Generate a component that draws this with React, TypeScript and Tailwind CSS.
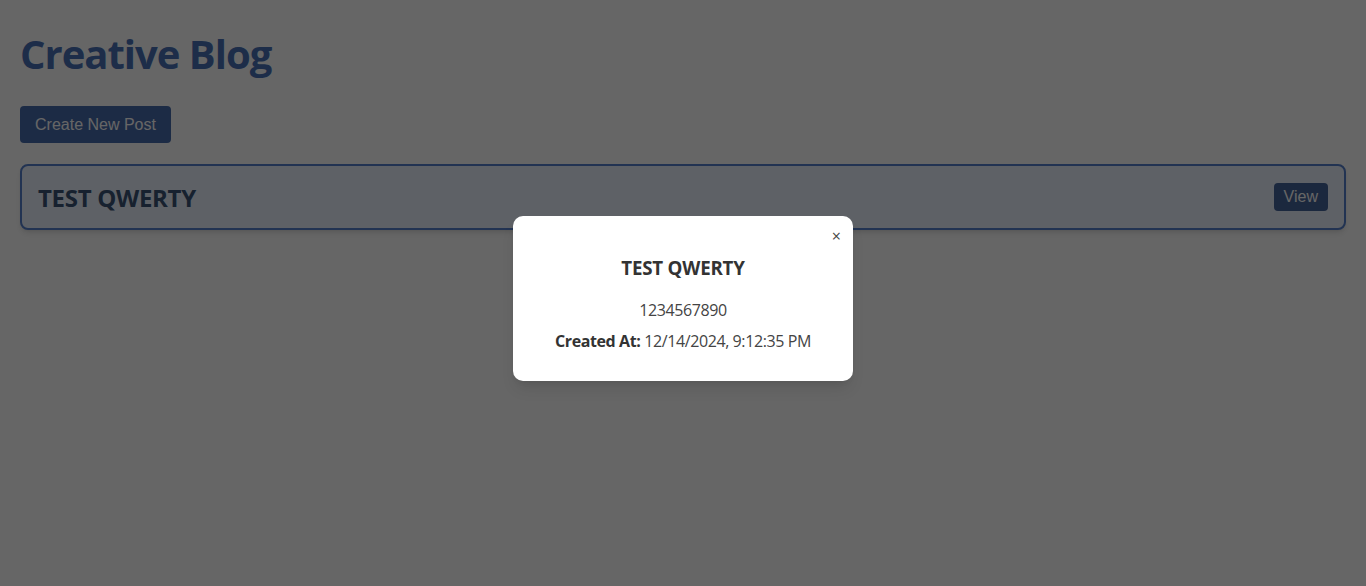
export default function App() {
  const post = {
    title: "TEST QWERTY",
    content: "1234567890",
    createdAt: "12/14/2024, 9:12:35 PM",
  };

  return (
    <div className="relative min-h-[586px] bg-white font-['Open_Sans',sans-serif]">
      <div className="px-5 pt-[30px]">
        <h1 className="mb-[28px] text-[40px] leading-[48px] font-bold tracking-[-1px] text-[#4a72b6]">
          Creative Blog
        </h1>
        <button className="h-[37px] rounded-[4px] bg-[#486cac] px-[15px] font-['Liberation_Sans',Arial,sans-serif] text-base text-white">
          Create New Post
        </button>
        <div className="mt-[21px] flex h-[66px] items-center justify-between rounded-lg border-2 border-[#5580cc] bg-[#ebf2ff] px-4 shadow-md">
          <h2 className="pt-[2px] text-2xl font-bold tracking-[-0.3px] text-[#3a5377]">{post.title}</h2>
          <button className="h-[28px] rounded-[4px] bg-[#44649b] px-[10px] font-['Liberation_Sans',Arial,sans-serif] text-base text-white">
            View
          </button>
        </div>
      </div>

      {/* modal */}
      <div className="absolute inset-0 flex items-start justify-center bg-black/60 pt-[216px]">
        <div className="relative w-[340px] rounded-[10px] bg-white px-5 pt-[39px] pb-[28px] text-center shadow-lg">
          <button className="absolute top-[12px] right-[12px] text-base leading-none text-[#444]">
            ×
          </button>
          <h3 className="text-[18.72px] leading-[26px] font-bold tracking-[-0.2px] text-[#333]">
            {post.title}
          </h3>
          <p className="mt-[17px] text-base leading-[24px] tracking-[-0.4px] text-[#444]">
            {post.content}
          </p>
          <p className="mt-[7px] text-base leading-[24px] tracking-[-0.4px] text-[#444]">
            <strong className="text-[#333]">Created At:</strong> {post.createdAt}
          </p>
        </div>
      </div>
    </div>
  );
}
